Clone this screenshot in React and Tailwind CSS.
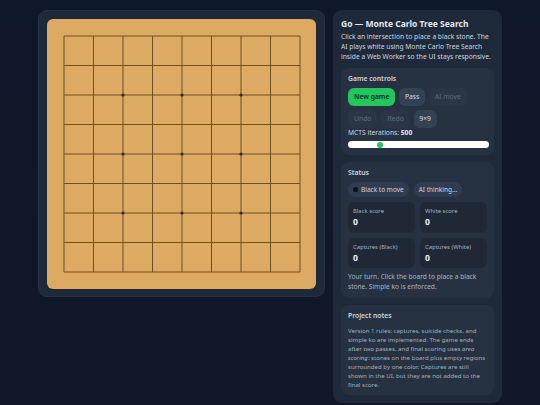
const CELL = 29.5;
const STARS = [2, 4, 6];

function Board() {
    const lines = [0, 1, 2, 3, 4, 5, 6, 7, 8];
    return (
        <svg width="269" height="270" viewBox="0 0 269 270" className="block">
            {lines.map(i => (
                <g key={i} stroke="#6f4e20" strokeWidth="1">
                    <line x1="17" y1={17 + i * CELL} x2={17 + 8 * CELL} y2={17 + i * CELL} />
                    <line x1={17 + i * CELL} y1="17" x2={17 + i * CELL} y2={17 + 8 * CELL} />
                </g>
            ))}
            {STARS.map(r => STARS.map(c => (
                <circle key={r + '-' + c} cx={17 + c * CELL} cy={17 + r * CELL} r="1.6" fill="#3a2810" />
            )))}
        </svg>
    );
}

function Btn({ children, kind }) {
    const styles = {
        primary: 'bg-[#22c55e] text-[#052e16] font-semibold px-[6px]',
        normal: 'bg-[#334155] text-[#d5dde8] px-[5.5px]',
        disabled: 'bg-[#2a3646] text-[#5f6c7e] px-[6px]',
    };
    return (
        <button className={`h-[18px] rounded-[6px] text-[6.8px] leading-none ${styles[kind]}`}>
            {children}
        </button>
    );
}

function Stat({ label, value }) {
    return (
        <div className="h-[30.5px] rounded-[6px] bg-[#202836] px-[5px] pt-[4px]">
            <div className="text-[5.9px] leading-[10px] text-[#a3afbf]">{label}</div>
            <div className="text-[8.6px] leading-[12px] font-bold text-[#f1f5f9]">{value}</div>
        </div>
    );
}

function Card({ title, children }) {
    return (
        <section className="rounded-[8px] bg-[#263241] px-[7px] pt-[6px] pb-[6px]">
            <h2 className="text-[6.8px] leading-[10px] font-semibold text-[#cbd5e1]">{title}</h2>
            {children}
        </section>
    );
}

export default function App() {
    return (
        <div
            className="h-[405px] w-[540px] overflow-hidden bg-gradient-to-b from-[#0f172a] to-[#111827] flex items-start justify-center gap-[8.5px] pt-[10px] text-[#e2e8f0]"
            style={{ fontFamily: '"Noto Sans", sans-serif' }}
        >
            {/* Board */}
            <div className="w-[286.5px] h-[286.5px] rounded-[9px] bg-[#1e2a3a] border border-[#263342] p-[7.5px]">
                <div className="rounded-[6px] bg-[#dcaa62] w-[269px] h-[270px] overflow-hidden">
                    <Board />
                </div>
            </div>

            {/* Side panel */}
            <aside className="w-[169px] h-[393px] rounded-[9px] bg-[#1e2a3a] px-[8px] pt-[8px] flex flex-col gap-[7px] shrink-0">
                <div className="mb-[-0.5px]">
                    <h1 className="text-[8.5px] leading-[12px] font-bold text-[#e2e8f0]">Go — Monte Carlo Tree Search</h1>
                    <p className="mt-[1.5px] text-[6.7px] leading-[10px] text-[#cbd5e1]">
                        Click an intersection to place a black stone. The AI plays white using Monte Carlo Tree Search inside a Web Worker so the UI stays responsive.
                    </p>
                </div>

                <Card title="Game controls">
                    <div className="mt-[4px] flex flex-wrap gap-[4px]">
                        <Btn kind="primary">New game</Btn>
                        <Btn kind="normal">Pass</Btn>
                        <Btn kind="disabled">AI move</Btn>
                        <Btn kind="disabled">Undo</Btn>
                        <Btn kind="disabled">Redo</Btn>
                        <Btn kind="normal">9×9</Btn>
                    </div>
                    <div className="text-[6.7px] leading-[10px] text-[#cbd5e1]">
                        MCTS iterations: <b className="font-bold text-[#e2e8f0]">500</b>
                    </div>
                    <div className="relative mt-[3px] mb-[1px] h-[7px] w-[141px] rounded-full bg-white">
                        <span className="absolute left-[29px] top-[0.5px] w-[6px] h-[6px] rounded-full bg-[#22c55e]" />
                    </div>
                </Card>

                <Card title="Status">
                    <div className="mt-[4px] flex gap-[5px]">
                        <span className="h-[15px] pl-[5px] pr-[5px] rounded-full bg-[#303d50] flex items-center gap-[3px] text-[6.5px] text-[#cbd5e1]">
                            <span className="w-[5px] h-[5px] rounded-full bg-[#0b0f17]" />
                            Black to move
                        </span>
                        <span className="h-[15px] px-[5px] rounded-full bg-[#303d50] flex items-center text-[6.5px] text-[#cbd5e1]">
                            AI thinking...
                        </span>
                    </div>
                    <div className="mt-[5px] grid grid-cols-2 gap-[5px] w-[139px]">
                        <Stat label="Black score" value="0" />
                        <Stat label="White score" value="0" />
                        <Stat label="Captures (Black)" value="0" />
                        <Stat label="Captures (White)" value="0" />
                    </div>
                    <p className="mt-[4px] text-[6.6px] leading-[10px] text-[#a9b4c3]">
                        Your turn. Click the board to place a black stone. Simple ko is enforced.
                    </p>
                </Card>

                <Card title="Project notes">
                    <p className="mt-[4.5px] text-[6.1px] leading-[9.1px] text-[#a3afbf]">
                        Version 1 rules: captures, suicide checks, and simple ko are implemented. The game ends after two passes, and final scoring uses <em>area scoring</em>: stones on the board plus empty regions surrounded by one color. Captures are still shown in the UI, but they are not added to the final score.
                    </p>
                </Card>
            </aside>
        </div>
    );
}
